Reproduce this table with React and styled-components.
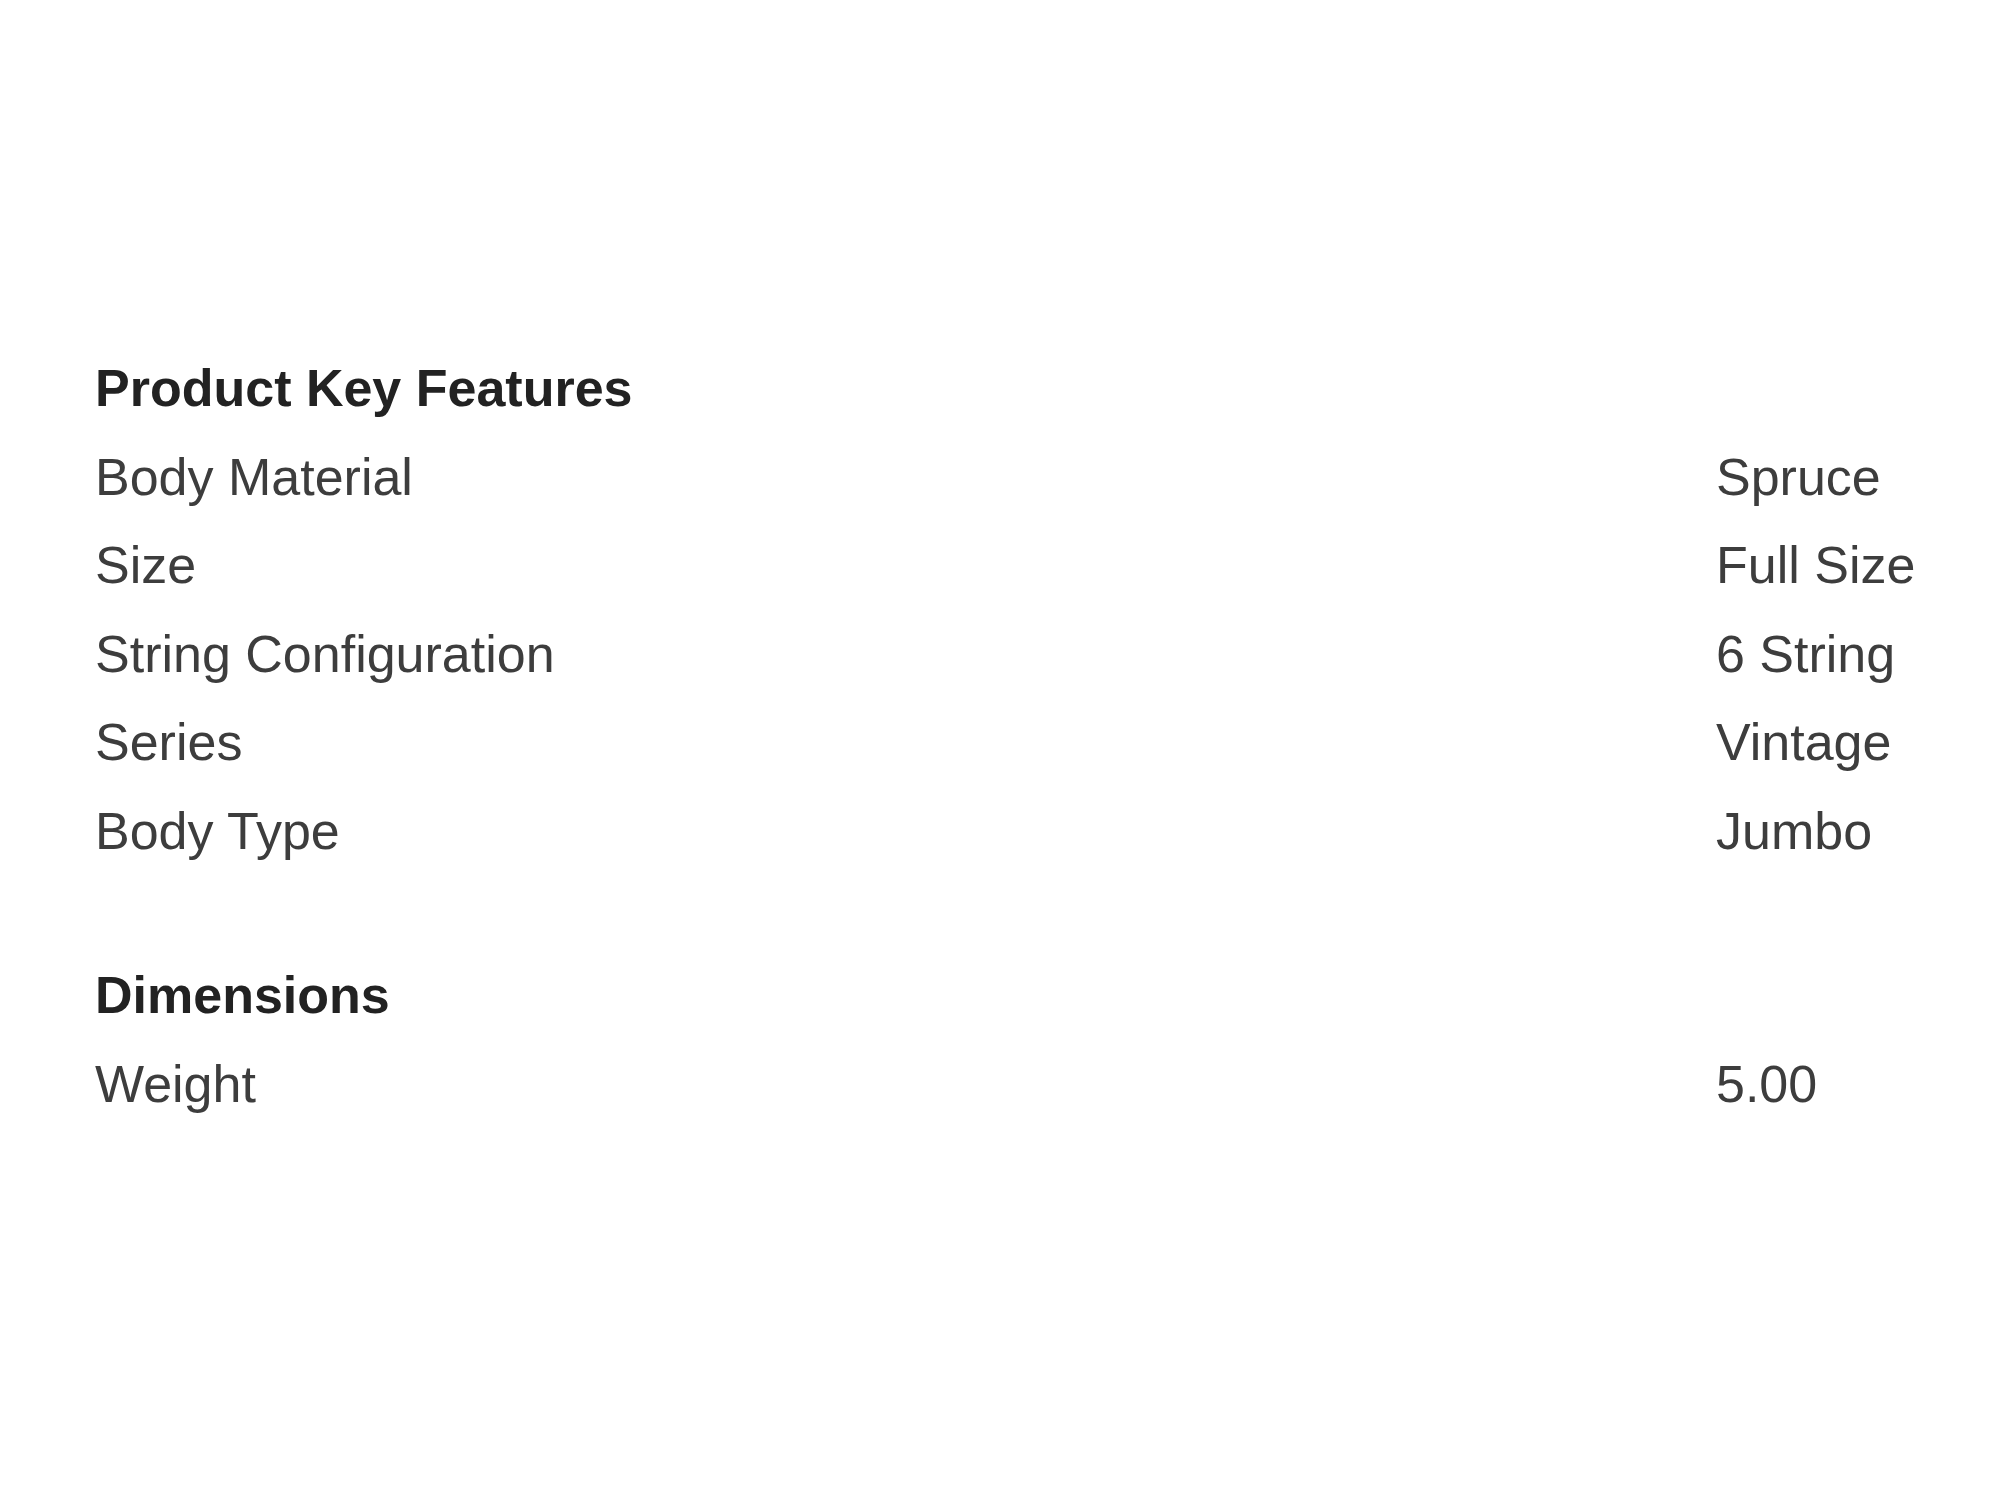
import React from 'react';
import styled, { createGlobalStyle } from 'styled-components';

const GlobalStyle = createGlobalStyle`
  body {
    margin: 0;
    background: #ffffff;
    font-family: "Liberation Sans", Arial, sans-serif;
  }
`;

const Page = styled.div`
  padding: 344px 0 0 95px;
  width: 2000px;
  box-sizing: border-box;
`;

const Section = styled.section`
  margin-bottom: ${(p) => p.$gap || 0}px;
`;

const Heading = styled.h3`
  margin: 0;
  font-size: 52px;
  line-height: 88.5px;
  font-weight: 700;
  color: #222222;
`;

const Table = styled.div`
  display: grid;
  grid-template-columns: 1621px 1fr;
`;

const Cell = styled.div`
  font-size: 52px;
  line-height: 88.5px;
  color: #3d3d3d;
  white-space: nowrap;
`;

const sections = [
  {
    title: 'Product Key Features',
    rows: [
      ['Body Material', 'Spruce'],
      ['Size', 'Full Size'],
      ['String Configuration', '6 String'],
      ['Series', 'Vintage'],
      ['Body Type', 'Jumbo'],
    ],
  },
  {
    title: 'Dimensions',
    rows: [['Weight', '5.00']],
  },
];

function App() {
  return (
    <>
      <GlobalStyle />
      <Page>
        {sections.map((s, i) => (
          <Section key={s.title} $gap={i === 0 ? 76 : 0}>
            <Heading>{s.title}</Heading>
            <Table>
              {s.rows.map(([label, value]) => (
                <React.Fragment key={label}>
                  <Cell>{label}</Cell>
                  <Cell>{value}</Cell>
                </React.Fragment>
              ))}
            </Table>
          </Section>
        ))}
      </Page>
    </>
  );
}

export default App;
